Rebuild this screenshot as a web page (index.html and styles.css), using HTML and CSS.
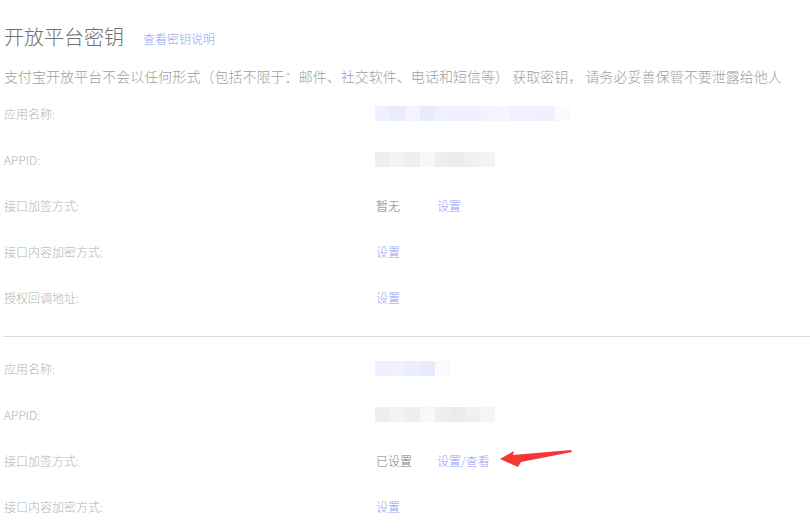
FILE: index.html
```html
<!DOCTYPE html>
<html lang="zh-CN">
<head>
<meta charset="utf-8">
<title>开放平台密钥</title>
<link rel="stylesheet" href="styles.css">
</head>
<body>
<div class="page">
  <header class="head">
    <h1 class="title">开放平台密钥</h1>
    <a class="link head-link">查看密钥说明</a>
  </header>
  <p class="notice">支付宝开放平台不会以任何形式（包括不限于：邮件、社交软件、电话和短信等） 获取密钥， 请务必妥善保管不要泄露给他人</p>

  <section class="group">
    <div class="row"><span class="label">应用名称:</span><span class="value"><span class="blur blur-name-long"></span></span></div>
    <div class="row"><span class="label">APPID:</span><span class="value"><span class="blur blur-id"></span></span></div>
    <div class="row"><span class="label">接口加签方式:</span><span class="value"><span class="state">暂无</span><a class="link">设置</a></span></div>
    <div class="row"><span class="label">接口内容加密方式:</span><span class="value"><a class="link">设置</a></span></div>
    <div class="row"><span class="label">授权回调地址:</span><span class="value"><a class="link">设置</a></span></div>
  </section>

  <hr class="divider">

  <section class="group group-second">
    <div class="row"><span class="label">应用名称:</span><span class="value"><span class="blur blur-name-short"></span></span></div>
    <div class="row"><span class="label">APPID:</span><span class="value"><span class="blur blur-id blur-id-2"></span></span></div>
    <div class="row"><span class="label">接口加签方式:</span><span class="value"><span class="state">已设置</span><a class="link">设置/查看</a>
      <svg class="arrow" width="80" height="24" viewBox="0 0 80 24"><polygon points="4,10 18,2 17,6 75,1 76,3 25,13 22,18" fill="#f43838"/></svg></span></div>
    <div class="row"><span class="label">接口内容加密方式:</span><span class="value"><a class="link">设置</a></span></div>
  </section>
</div>
</body>
</html>
```

FILE: styles.css
```css
html, body {
  margin: 0;
  padding: 0;
  background: #fff;
}
body {
  font-family: "Noto Sans CJK SC", "Noto Sans", "Liberation Sans", sans-serif;
  overflow: hidden;
  height: 529px;
}
.page {
  padding: 22px 0 0 4px;
}
.head {
  display: flex;
  align-items: center;
  height: 30px;
}
.title {
  margin: 0;
  font-size: 20px;
  font-weight: 300;
  color: #707070;
  line-height: 30px;
}
.link {
  color: #94a2f6;
  font-size: 12px;
  font-weight: 300;
  cursor: pointer;
}
.head-link {
  margin-left: 19px;
  margin-top: 2px;
}
.notice {
  margin: 14px 0 0 0;
  font-size: 14px;
  line-height: 20px;
  color: #9e9e9e;
  font-weight: 300;
  white-space: nowrap;
  letter-spacing: 0.03px;
}
.group {
  margin-top: 4px;
}
.group-second {
  margin-top: 8px;
}
.row {
  display: grid;
  grid-template-columns: 372px 1fr;
  align-items: center;
  height: 46px;
  font-size: 12px;
}
.label {
  color: #b3b3b3;
  font-weight: 300;
}
.value {
  display: flex;
  align-items: center;
  position: relative;
}
.state {
  color: #7c7c7c;
  font-weight: 300;
  width: 61px;
}
.blur {
  display: block;
  height: 15px;
  margin-left: -1px;
}
.blur-name-long {
  width: 195px;
  background: linear-gradient(to right,
    #eef0fe 0 15px, #e9ecfe 15px 30px, #f3f4fe 30px 45px, #e8ebfe 45px 60px,
    #eff1fe 60px 75px, #eef0fe 75px 105px, #f2f3fe 105px 120px, #f4f5fe 120px 135px,
    #eff1fe 135px 165px, #eef0fe 165px 180px, #fafaff 180px 195px);
}
.blur-name-short {
  width: 75px;
  background: linear-gradient(to right,
    #eef0fe 0 15px, #eff1fe 15px 30px, #ebeefe 30px 45px, #e8ebfe 45px 60px, #fbfbfe 60px 75px);
}
.blur-id {
  width: 120px;
  background: linear-gradient(to right,
    #efefef 0 15px, #f3f3f3 15px 30px, #efefef 30px 45px, #f8f8f8 45px 60px,
    #eeeeee 60px 75px, #ececec 75px 90px, #f0f0f0 90px 105px, #f4f4f4 105px 120px);
}
.blur-id-2 {
  background: linear-gradient(to right,
    #efefef 0 15px, #f3f3f3 15px 30px, #efefef 30px 45px, #f8f8f8 45px 60px,
    #eeeeee 60px 75px, #ebebeb 75px 90px, #f0f0f0 90px 105px, #f5f5f5 105px 120px);
}
.divider {
  margin: 16px 0 0 -1px;
  border: 0;
  border-top: 1px solid #dcdcdc;
  height: 0;
}
.arrow {
  position: absolute;
  left: 120px;
  top: -3px;
}
```
